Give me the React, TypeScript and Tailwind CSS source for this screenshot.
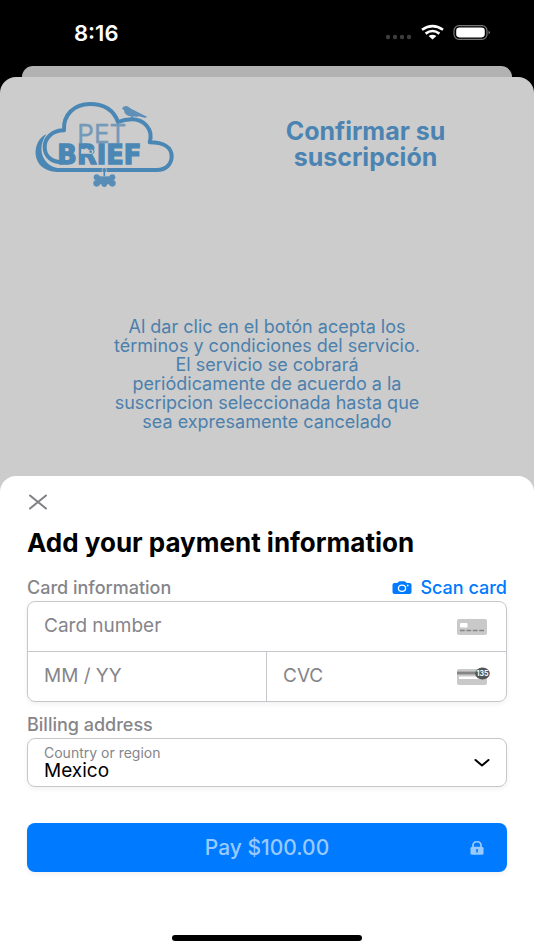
import React from "react";

function StatusIcons() {
  return (
    <svg width="108" height="20" viewBox="0 0 108 20" aria-hidden="true">
      <g fill="#3d3d3d">
        <circle cx="5" cy="14" r="2.2" />
        <circle cx="12" cy="14" r="2.2" />
        <circle cx="19" cy="14" r="2.2" />
        <circle cx="26" cy="14" r="2.2" />
      </g>
      <g fill="none" stroke="#fff" strokeWidth="2.6">
        <path d="M39 6.800 Q49.500 -.6 60 6.800" />
        <path d="M42.600 10.600 Q49.500 5.400 56.400 10.600" />
      </g>
      <path d="M45.600 13 Q49.500 10.300 53.400 13 L49.500 16.400 Z" fill="#fff" />
      <rect x="71" y="2.700" width="33" height="13.600" rx="5" fill="none" stroke="#777" strokeWidth="1.200" />
      <rect x="73.200" y="4.600" width="28.600" height="9.800" rx="3.300" fill="#fff" />
      <path d="M105.600 7.500 Q108.200 9.500 105.600 11.500 Z" fill="#888" />
    </svg>
  );
}

function Logo() {
  return (
    <svg width="160" height="105" viewBox="0 0 480 315" role="img" aria-label="Pet Brief" className="shrink-0">
      <g fill="none" stroke="#4b87b5" strokeWidth="12" strokeLinejoin="round">
        <path d="M95 240 H395 C424 240 440 222 440 199 C440 172 416 157 374 157 C386 116 356 88 320 88 C305 88 291 91 279 96 C266 60 235 42 195 42 C148 42 114 74 117 121 C80 121 59 145 59 171 C59 201 82 217 112 217" />
      </g>
      <path d="M64 133 C20 150 12 243 97 246 L112 236 C62 236 29 186 64 133 Z" fill="#4b87b5" />
      <path d="M291 57 C294 48 304 46 311 51 C318 58 330 61 339 67 L366 80 L361 84 L342 79 C334 82 328 80 324 79 L327 84 L320 83 L317 79 C303 77 298 69 297 60 Z" fill="#5f8fb6" />
      <text x="157" y="160" fontFamily="Inter, sans-serif" fontSize="78" fill="#7599b9" stroke="#7599b9" strokeWidth="1">PET</text>
      <text x="97" y="222" fontFamily="'DejaVu Sans', sans-serif" fontWeight="700" fontSize="77" fill="#4b87b5" stroke="#4b87b5" strokeWidth="4">BRIEF</text>
      <path d="M169 182 Q166 174 174 177 L192 181 Q202 175 206 184 Q204 194 193 191 L174 191 Q166 194 169 182 Z" fill="#ccc" />
      <circle cx="197" cy="185" r="4" fill="#4b87b5" />
      <path d="M208 176 Q215 185 208 194" fill="none" stroke="#ccc" strokeWidth="3" />
      <circle cx="238" cy="241" r="7" fill="none" stroke="#ccc" strokeWidth="2" />
      <path d="M238 234 V258" stroke="#4b87b5" strokeWidth="5" />
      <g fill="#5a8db5">
        <rect x="215" y="259" width="48" height="24" />
        <circle cx="215" cy="262" r="9" />
        <circle cx="215" cy="280" r="10" />
        <circle cx="262" cy="262" r="9" />
        <circle cx="262" cy="280" r="10" />
        <circle cx="238" cy="283" r="8" />
      </g>
    </svg>
  );
}

function CameraIcon() {
  return (
    <svg width="20" height="14" viewBox="0 0 20 14" aria-hidden="true">
      <path d="M2.500 2 H5.300 L6.600 .7 Q7 .3 7.700 .3 H12.300 Q13 .3 13.400 .7 L14.700 2 H17.500 Q19.500 2 19.500 3.800 V11.200 Q19.500 13 17.500 13 H2.500 Q.5 13 .5 11.200 V3.800 Q.5 2 2.500 2 Z" fill="#007aff" />
      <ellipse cx="10" cy="7.300" rx="3.600" ry="3.100" fill="none" stroke="#fff" strokeWidth="1.300" />
      <circle cx="15.700" cy="4.500" r=".9" fill="#fff" />
    </svg>
  );
}

function CardIcon() {
  return (
    <svg width="34" height="20" viewBox="0 0 34 20" className="shrink-0" aria-hidden="true">
      <rect x="1" y="2" width="30" height="16" rx="2" fill="#c9c9c9" />
      <rect x="4" y="6" width="7.500" height="4.500" rx="1" fill="#fff" />
      <path d="M4 13.500 H28" stroke="#858585" strokeWidth="1.600" strokeDasharray="4.800 1.600" />
    </svg>
  );
}

function CvcIcon() {
  return (
    <svg width="34" height="20" viewBox="0 0 34 20" className="shrink-0" aria-hidden="true">
      <rect x="1" y="2" width="30" height="16" rx="2" fill="#c9c9c9" />
      <path d="M1 6 H31" stroke="#858585" strokeWidth="2.800" />
      <rect x="3" y="9.500" width="25" height="2.500" fill="#fff" />
      <ellipse cx="26.500" cy="6.500" rx="7.300" ry="6" fill="#555" />
      <text x="26.500" y="9.300" textAnchor="middle" fontFamily="Inter, sans-serif" fontWeight="700" fontSize="7" fill="#fff">135</text>
    </svg>
  );
}

const field =
  "min-w-0 flex-1 bg-transparent text-[19px] text-black outline-none placeholder:text-[#85858a]";

export default function App() {
  return (
    <main className="flex min-h-screen flex-col bg-black font-['Inter',sans-serif]">
      <header className="flex h-[66px] items-center justify-between pr-[43px] pl-[74px]">
        <time className="text-[22px] font-semibold text-white">8:16</time>
        <StatusIcons />
      </header>
      <div className="mx-[22px] h-[11px] rounded-t-xl bg-[#b2b2b2]" />
      <div className="flex flex-1 flex-col rounded-t-2xl bg-[#cccccc]">
        <section className="flex-1">
          <div className="flex items-start gap-3 pt-[13px] pl-[25px]">
            <Logo />
            <h1 className="mt-7 flex-1 text-center text-[25px] leading-[26px] font-bold text-[#4b84b2]">
              Confirmar su
              <br />
              suscripción
            </h1>
          </div>
          <p className="mt-[122px] text-center text-lg leading-[19px] text-[#4b80ad]">
            Al dar clic en el botón acepta los
            <br />
            términos y condiciones del servicio.
            <br />
            El servicio se cobrará
            <br />
            periódicamente de acuerdo a la
            <br />
            suscripcion seleccionada hasta que
            <br />
            sea expresamente cancelado
          </p>
        </section>
        <form
          className="flex flex-col rounded-t-2xl bg-white px-[27px] pt-[17px] pb-[9px]"
          onSubmit={(event) => event.preventDefault()}
        >
          <button type="button" aria-label="Close" className="flex h-[18px] w-[22px] items-center justify-center">
            <svg width="20" height="16" viewBox="0 0 20 16" aria-hidden="true">
              <path d="M2 1.500 L18 14.500 M18 1.500 L2 14.500" stroke="#7f7f84" strokeWidth="2" strokeLinecap="round" />
            </svg>
          </button>
          <h2 className="mt-[17px] text-[26px] leading-[30px] font-bold text-black">Add your payment information</h2>
          <div className="mt-5 flex items-center justify-between text-lg leading-5 font-medium">
            <span id="card-label" className="text-[#85858a]">Card information</span>
            <button type="button" className="flex items-center gap-2 text-[#007aff]">
              <CameraIcon />
              Scan card
            </button>
          </div>
          <div
            role="group"
            aria-labelledby="card-label"
            className="mt-[3px] rounded-lg border border-[#c6c6cb] shadow-[0_2px_5px_rgba(0,0,0,0.06)]"
          >
            <div className="flex h-[50px] items-center border-b border-[#c6c6cb] px-4">
              <input aria-label="Card number" placeholder="Card number" className={field} />
              <CardIcon />
            </div>
            <div className="grid grid-cols-2">
              <div className="flex h-[49px] items-center border-r border-[#c6c6cb] px-4">
                <input aria-label="Expiration date" placeholder="MM / YY" className={field} />
              </div>
              <div className="flex h-[49px] items-center px-4">
                <input aria-label="CVC" placeholder="CVC" className={field} />
                <CvcIcon />
              </div>
            </div>
          </div>
          <h3 className="mt-[13px] text-lg leading-5 font-medium text-[#85858a]">Billing address</h3>
          <div className="mt-[3px] flex h-[49px] items-center rounded-lg border border-[#c6c6cb] px-4 shadow-[0_2px_5px_rgba(0,0,0,0.06)]">
            <div className="flex flex-1 flex-col">
              <label htmlFor="country" className="text-sm leading-4 text-[#85858a]">Country or region</label>
              <select id="country" className="appearance-none bg-transparent text-[19px] leading-5 text-black outline-none">
                <option>Mexico</option>
              </select>
            </div>
            <svg width="16" height="10" viewBox="0 0 16 10" className="pointer-events-none" aria-hidden="true">
              <path d="M1.500 2 L8 7.500 L14.500 2" fill="none" stroke="#000" strokeWidth="2" strokeLinecap="round" strokeLinejoin="round" />
            </svg>
          </div>
          <button
            type="submit"
            className="mt-9 grid h-[49px] grid-cols-[1fr_auto_1fr] items-center rounded-lg bg-[#007aff] px-[22px] text-[21px] font-medium text-[#99caff] shadow-[0_2px_5px_rgba(0,0,0,0.06)]"
          >
            <span className="col-start-2">Pay $100.00</span>
            <svg width="16" height="16" viewBox="0 0 16 16" className="justify-self-end" aria-hidden="true">
              <path d="M4 7 V5.500 C4 .5 12 .5 12 5.500 V7" fill="none" stroke="#99caff" strokeWidth="1.700" />
              <rect x="1.500" y="6.800" width="13" height="8" rx="1.500" fill="#99caff" />
              <path d="M8 9 V12.500" stroke="#007aff" strokeWidth="1.600" />
            </svg>
          </button>
          <div className="mt-[63px] h-[6px] w-[190px] self-center rounded-full bg-black" />
        </form>
      </div>
    </main>
  );
}
